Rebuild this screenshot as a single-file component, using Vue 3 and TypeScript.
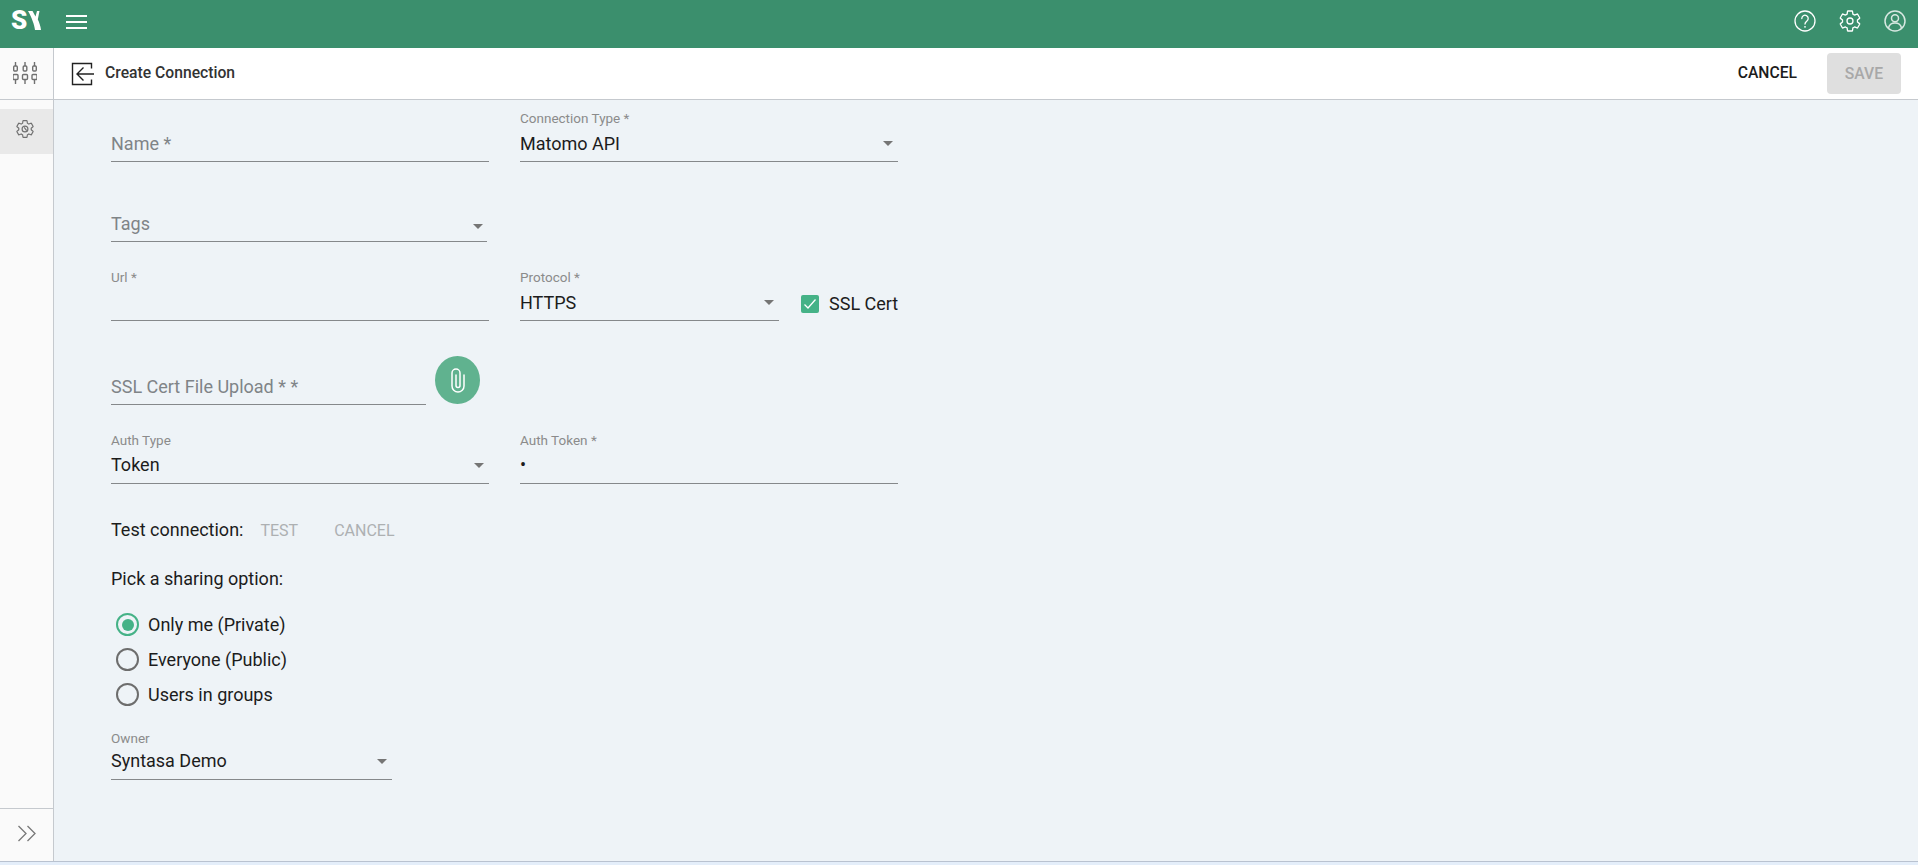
<script setup lang="ts">
const radios = [
  { label: 'Only me (Private)', on: true },
  { label: 'Everyone (Public)', on: false },
  { label: 'Users in groups', on: false },
]
const gear = 'M19.43 12.98c.04-.32.07-.64.07-.98 0-.34-.03-.66-.07-.98l2.11-1.65c.19-.15.24-.42.12-.64l-2-3.46c-.09-.16-.26-.25-.44-.25-.06 0-.12.01-.17.03l-2.49 1c-.52-.4-1.08-.73-1.69-.98l-.38-2.65C14.46 2.18 14.25 2 14 2h-4c-.25 0-.46.18-.49.42l-.38 2.65c-.61.25-1.17.59-1.69.98l-2.49-1c-.06-.02-.12-.03-.18-.03-.17 0-.34.09-.43.25l-2 3.46c-.13.22-.07.49.12.64l2.11 1.65c-.04.32-.07.65-.07.98 0 .33.03.66.07.98l-2.11 1.65c-.19.15-.24.42-.12.64l2 3.46c.09.16.26.25.44.25.06 0 .12-.01.17-.03l2.49-1c.52.4 1.08.73 1.69.98l.38 2.65c.03.24.24.42.49.42h4c.25 0 .46-.18.49-.42l.38-2.65c.61-.25 1.17-.59 1.69-.98l2.49 1c.06.02.12.03.18.03.17 0 .34-.09.43-.25l2-3.46c.12-.22.07-.49-.12-.64l-2.11-1.65z'
</script>

<template>
  <div class="app">
    <header class="topbar">
      <div class="logo">
        <span class="logo-s">S</span>
        <svg width="13" height="19" viewBox="0 0 13 19"><path d="M0 0h4.500l3 5.500L9 0h2.500L9.800 8.500c1.500 3 2.700 6.500 3.200 10.500H7C6.500 14 3.500 6 0 0z" fill="#fff"/></svg>
      </div>
      <button class="burger" aria-label="Menu">
        <span></span><span></span><span></span>
      </button>
      <div class="spacer"></div>
      <svg class="top-icon" viewBox="0 0 24 24" fill="none" stroke="#fff" stroke-width="1.300"><circle cx="12" cy="12" r="10"/><path d="M8.800 9.500a3.200 3.200 0 1 1 5.100 2.500c-1 .8-1.900 1.400-1.900 3" stroke-linecap="round"/><circle cx="12" cy="17.800" r=".9" fill="#fff" stroke="none"/></svg>
      <svg class="top-icon" viewBox="0 0 24 24" fill="none" stroke="#fff" stroke-width="1.300" stroke-linejoin="round"><circle cx="12" cy="12" r="3"/><path :d="gear"/></svg>
      <svg class="top-icon dim" viewBox="0 0 24 24" fill="none" stroke="#fff" stroke-width="1.500"><circle cx="12" cy="12" r="10"/><circle cx="12" cy="9.300" r="3.500"/><path d="M5.500 19c.6-3.200 3.300-5 6.500-5s5.900 1.800 6.500 5"/></svg>
    </header>

    <div class="body">
      <aside class="sidebar">
        <div class="side-top">
          <svg width="24" height="24" viewBox="0 0 24 24" fill="none" stroke="#707070" stroke-width="1.400">
            <path d="M2.500 1v4M2.500 18.500V23M12 1v4M12 18.500V23M21.500 1v4M21.500 18.500V23"/>
            <rect x="0.700" y="5" width="3.600" height="5" rx="1"/><rect x="10.200" y="5" width="3.600" height="5" rx="1"/><rect x="19.700" y="5" width="3.600" height="5" rx="1"/>
            <rect x="0" y="13.500" width="5" height="5" rx="1"/><rect x="9.500" y="13.500" width="5" height="5" rx="1"/><rect x="19" y="13.500" width="5" height="5" rx="1"/>
          </svg>
        </div>
        <div class="side-item">
          <svg width="20" height="20" viewBox="0 0 24 24" fill="none" stroke="#707070" stroke-width="1.400" stroke-linejoin="round"><circle cx="12" cy="12" r="3.500"/><path d="M11 10l3 4" /><path :d="gear"/></svg>
        </div>
        <div class="spacer"></div>
        <div class="side-bottom">
          <svg width="20" height="17" viewBox="0 0 20 17" fill="none" stroke="#777" stroke-width="1.300"><path d="M1.500 1l7.500 7.500-7.500 7.500M10.500 1l7.500 7.500-7.500 7.500"/></svg>
        </div>
      </aside>

      <main class="main">
        <div class="toolbar">
          <svg class="back" width="24" height="24" viewBox="0 0 24 24" fill="none" stroke="#222" stroke-width="1.400"><path d="M20.500 6.500V1.500H1.500v21h19v-5"/><path d="M23 12H6M12.500 5.500L6 12l6.500 6.500"/></svg>
          <span class="title">Create Connection</span>
          <div class="spacer"></div>
          <button class="btn-cancel">CANCEL</button>
          <button class="btn-save" disabled>SAVE</button>
        </div>

        <form class="form" @submit.prevent>
          <div class="row r1">
            <div class="field w378"><span class="placeholder">Name *</span></div>
            <div class="field w378">
              <label class="lbl">Connection Type *</label>
              <span class="value">Matomo API</span><i class="caret"></i>
            </div>
          </div>
          <div class="row r2">
            <div class="field w376"><span class="placeholder">Tags</span><i class="caret low"></i></div>
          </div>
          <div class="row r3">
            <div class="field w378"><label class="lbl">Url *</label></div>
            <div class="field w259">
              <label class="lbl">Protocol *</label>
              <span class="value">HTTPS</span><i class="caret"></i>
            </div>
            <div class="check">
              <span class="box">
                <svg width="14" height="14" viewBox="0 0 14 14" fill="none" stroke="#fff" stroke-width="1.300"><path d="M1.500 7.500l3.500 3.500 7.500-8.500"/></svg>
              </span>
              <span class="check-text">SSL Cert</span>
            </div>
          </div>
          <div class="row r4">
            <div class="field w315"><span class="placeholder">SSL Cert File Upload * *</span></div>
            <button class="clip" aria-label="Attach">
              <svg width="14" height="25" viewBox="0 0 14 25" fill="none" stroke="#fff" stroke-width="1.500" stroke-linecap="round"><path d="M13 7v11a6 6 0 0 1-12 0V5a4 4 0 0 1 8 0v12.500a2 2 0 0 1-4 0V7"/></svg>
            </button>
          </div>
          <div class="row r5">
            <div class="field w378">
              <label class="lbl">Auth Type</label>
              <span class="value keep">Token</span><i class="caret"></i>
            </div>
            <div class="field w378">
              <label class="lbl">Auth Token *</label>
              <span class="value keep">•</span>
            </div>
          </div>
          <div class="test">
            <span>Test connection:</span>
            <span class="link l1">TEST</span>
            <span class="link l2">CANCEL</span>
          </div>
          <div class="pick">Pick a sharing option:</div>
          <div class="radios">
            <div v-for="r in radios" :key="r.label" class="radio">
              <span class="dot" :class="{ on: r.on }"></span>
              <span>{{ r.label }}</span>
            </div>
          </div>
          <div class="field w281 owner">
            <label class="lbl">Owner</label>
            <span class="value keep">Syntasa Demo</span><i class="caret"></i>
          </div>
        </form>
      </main>
    </div>
    <div class="foot"></div>
  </div>
</template>

<style>
html, body { margin: 0; background: #eef3f7; overflow: hidden; }
</style>

<style scoped>
.app { width: 1918px; height: 865px; display: flex; flex-direction: column; font-family: Roboto, "Liberation Sans", sans-serif; color: #1c1c1c; font-size: 18px; background: #eef3f7; }
.spacer { flex: 1; }
.topbar { height: 48px; flex: none; background: #3b8f6d; display: flex; align-items: center; box-sizing: border-box; padding-right: 11px; }
.logo { width: 54px; padding-left: 11px; box-sizing: border-box; display: flex; align-items: center; gap: 1px; height: 40px; margin-bottom: 8px; }
.logo-s { color: #fff; font-weight: 900; font-size: 26px; line-height: 1; }
.burger { width: 21px; padding: 0; margin-left: 12px; margin-bottom: 5px; background: none; border: 0; display: flex; flex-direction: column; gap: 4px; }
.burger span { display: block; height: 2px; background: #fff; }
.top-icon { width: 24px; height: 24px; margin-left: 21px; margin-bottom: 6px; }
.dim { opacity: .8; }
.body { flex: 1; display: flex; min-height: 0; }
.sidebar { width: 54px; flex: none; box-sizing: border-box; background: #fafafa; border-right: 1px solid #c5c9ce; display: flex; flex-direction: column; }
.side-top { height: 52px; box-sizing: border-box; border-bottom: 1px solid #c5c9ce; padding: 0 3px 2px 0; display: flex; align-items: center; justify-content: center; }
.side-item { margin-top: 9px; height: 45px; box-sizing: border-box; padding: 0 3px 5px 0; background: #e9e9e9; display: flex; align-items: center; justify-content: center; }
.side-bottom { height: 53px; box-sizing: border-box; border-top: 1px solid #c5c9ce; padding-bottom: 3px; display: flex; align-items: center; justify-content: center; }
.main { flex: 1; display: flex; flex-direction: column; min-width: 0; }
.toolbar { height: 52px; flex: none; box-sizing: border-box; background: #fff; border-bottom: 1px solid #c5c9ce; display: flex; align-items: center; padding: 0 17px 0 17px; }
.back { flex: none; }
.title { margin-left: 10px; margin-bottom: 2px; font-size: 15.700px; font-weight: 500; color: #333; }
.btn-cancel { background: none; border: 0; padding: 0; margin-bottom: 2px; font: 500 15.700px Roboto, sans-serif; color: #1c1c1c; margin-right: 30px; }
.btn-save { width: 74px; height: 41px; border: 0; border-radius: 4px; background: #dfdfdf; color: #a8a8a8; font: 500 15.700px Roboto, sans-serif; padding: 0 0 1px; }
.form { padding-left: 57px; flex: 1; display: flex; flex-direction: column; align-items: flex-start; }
.row { display: flex; align-items: flex-end; gap: 31px; }
.r1 { height: 62px; }
.r2 { height: 80px; }
.r3 { height: 79px; }
.r4 { height: 84px; gap: 9px; }
.r5 { height: 79px; }
.field { position: relative; box-sizing: border-box; height: 32px; border-bottom: 1px solid #85888b; }
.w378 { width: 378px; }
.w376 { width: 376px; }
.w315 { width: 315px; }
.w259 { width: 259px; }
.w281 { width: 281px; }
.lbl { position: absolute; left: 0; top: -20px; font-size: 13.500px; line-height: 16px; color: #8b8b8b; }
.owner .lbl { top: -18px; }
.placeholder { position: absolute; left: 0; bottom: 7px; font-size: 18px; line-height: 20px; color: #7f8487; }
.value { position: absolute; left: 0; bottom: 7px; font-size: 18px; line-height: 20px; }
.value.keep { bottom: 8px; }
.caret { position: absolute; right: 5px; bottom: 15px; width: 0; height: 0; border-left: 5px solid transparent; border-right: 5px solid transparent; border-top: 5px solid #757575; }
.caret.low { bottom: 12px; right: 4px; }
.check { display: flex; align-items: center; gap: 10px; height: 32px; margin-left: -9px; margin-bottom: 1px; }
.check-text { margin-bottom: 2px; }
.box { width: 18px; height: 18px; background: #45b287; border-radius: 2px; display: flex; align-items: center; justify-content: center; }
.clip { width: 45px; height: 48px; padding: 0; border: 0; border-radius: 50%; background: #60b28f; display: flex; align-items: center; justify-content: center; margin-bottom: 1px; }
.test { margin-top: 36px; height: 20px; display: flex; align-items: center; line-height: 20px; }
.link { font-size: 16px; color: #adb0b2; margin-top: 1px; }
.l1 { margin-left: 17px; }
.l2 { margin-left: 36px; }
.pick { margin-top: 29px; line-height: 20px; }
.radios { margin-top: 24px; margin-left: 5px; display: flex; flex-direction: column; gap: 12px; }
.radio { display: flex; align-items: center; gap: 9px; height: 23px; }
.dot { position: relative; width: 23px; height: 23px; box-sizing: border-box; border: 2px solid #6d6d6d; border-radius: 50%; }
.dot.on { border-color: #45b287; }
.dot.on::after { content: ""; position: absolute; left: 3.500px; top: 3.500px; width: 12px; height: 12px; border-radius: 50%; background: #45b287; }
.owner { margin-top: 42px; }
.foot { height: 4px; flex: none; background: #e4eefa; border-top: 1px solid #b9c2d0; box-sizing: border-box; }
</style>
